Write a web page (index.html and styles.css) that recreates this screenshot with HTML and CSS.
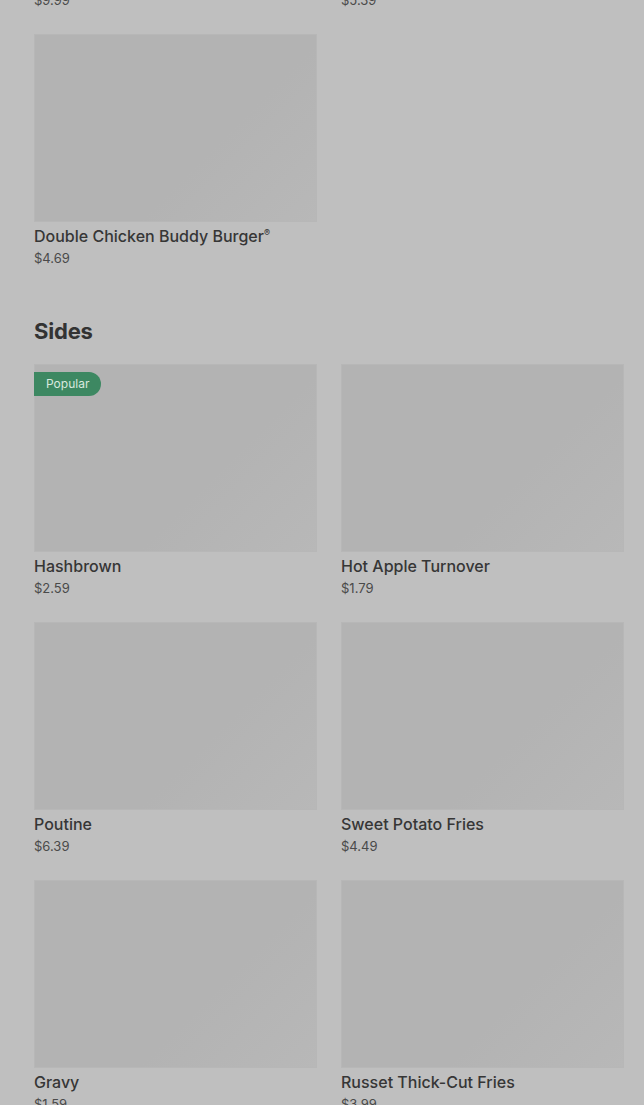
FILE: index.html
```html
<!DOCTYPE html>
<html lang="en">
<head>
	<meta charset="UTF-8">
	<title>Menu</title>
	<link rel="stylesheet" href="styles.css">
</head>
<body>
	<main class="menu">
		<!-- tail of the previous category, scrolled past -->
		<div class="grid cut">
			<span class="price">$9.99</span>
			<span class="price">$5.39</span>
		</div>

		<section class="category">
			<div class="grid">
				<a class="item">
					<div class="photo"></div>
					<h4 class="name">Double Chicken Buddy Burger<sup>®</sup></h4>
					<span class="price">$4.69</span>
				</a>
			</div>
		</section>

		<section class="category">
			<h2 class="heading">Sides</h2>
			<div class="grid">
				<a class="item">
					<div class="photo"><span class="badge">Popular</span></div>
					<h4 class="name">Hashbrown</h4>
					<span class="price">$2.59</span>
				</a>
				<a class="item">
					<div class="photo"></div>
					<h4 class="name">Hot Apple Turnover</h4>
					<span class="price">$1.79</span>
				</a>
				<a class="item">
					<div class="photo"></div>
					<h4 class="name">Poutine</h4>
					<span class="price">$6.39</span>
				</a>
				<a class="item">
					<div class="photo"></div>
					<h4 class="name">Sweet Potato Fries</h4>
					<span class="price">$4.49</span>
				</a>
				<a class="item">
					<div class="photo"></div>
					<h4 class="name">Gravy</h4>
					<span class="price">$1.59</span>
				</a>
				<a class="item">
					<div class="photo"></div>
					<h4 class="name">Russet Thick-Cut Fries</h4>
					<span class="price">$3.99</span>
				</a>
			</div>
		</section>
	</main>
</body>
</html>
```

FILE: styles.css
```css
html,body{
	margin: 0;
	height: 100%;
	overflow: hidden;
	background-color: #bfbfbf;
}
body{
	font-family: Inter, "Noto Sans", sans-serif;
	color: #363636;
}
.menu{
	padding: 0 20px 0 34px;
}
.grid{
	display: grid;
	grid-template-columns: 1fr 1fr;
	column-gap: 24px;
	row-gap: 25px;
}
/* 上一分类的价格行，只露出一半 */
.cut{
	margin-top: -9px;
	margin-bottom: 25px;
}
.cut .price{
	margin-top: 0;
}
.category{
	padding-bottom: 50px;
}
.heading{
	margin: 0 0 19px;
	font-size: 22px;
	line-height: 28px;
	font-weight: 700;
	letter-spacing: -0.2px;
	color: #333;
}
.item{
	display: flex;
	flex-direction: column;
}
.photo{
	position: relative;
	height: 188px;
	background: linear-gradient(135deg, #b3b3b3 0%, #b3b3b3 62%, #b8b8b8 100%);
	box-shadow: 0 0 0 1px #b7b7b7 inset;
}
.badge{
	position: absolute;
	top: 8px;
	left: 0;
	height: 24px;
	padding: 0 12px;
	font-size: 12px;
	line-height: 24px;
	color: #d9e9df;
	background-color: #3d8862;
	border-radius: 0 12px 12px 0;
}
.name{
	margin: 4px 0 0;
	font-size: 16px;
	line-height: 20px;
	font-weight: 500;
	color: #363636;
}
.name sup{
	font-size: 9px;
	vertical-align: 6px;
	line-height: 0;
}
.price{
	margin-top: 3px;
	font-size: 13px;
	line-height: 18px;
	color: #4a4a4a;
}
```
